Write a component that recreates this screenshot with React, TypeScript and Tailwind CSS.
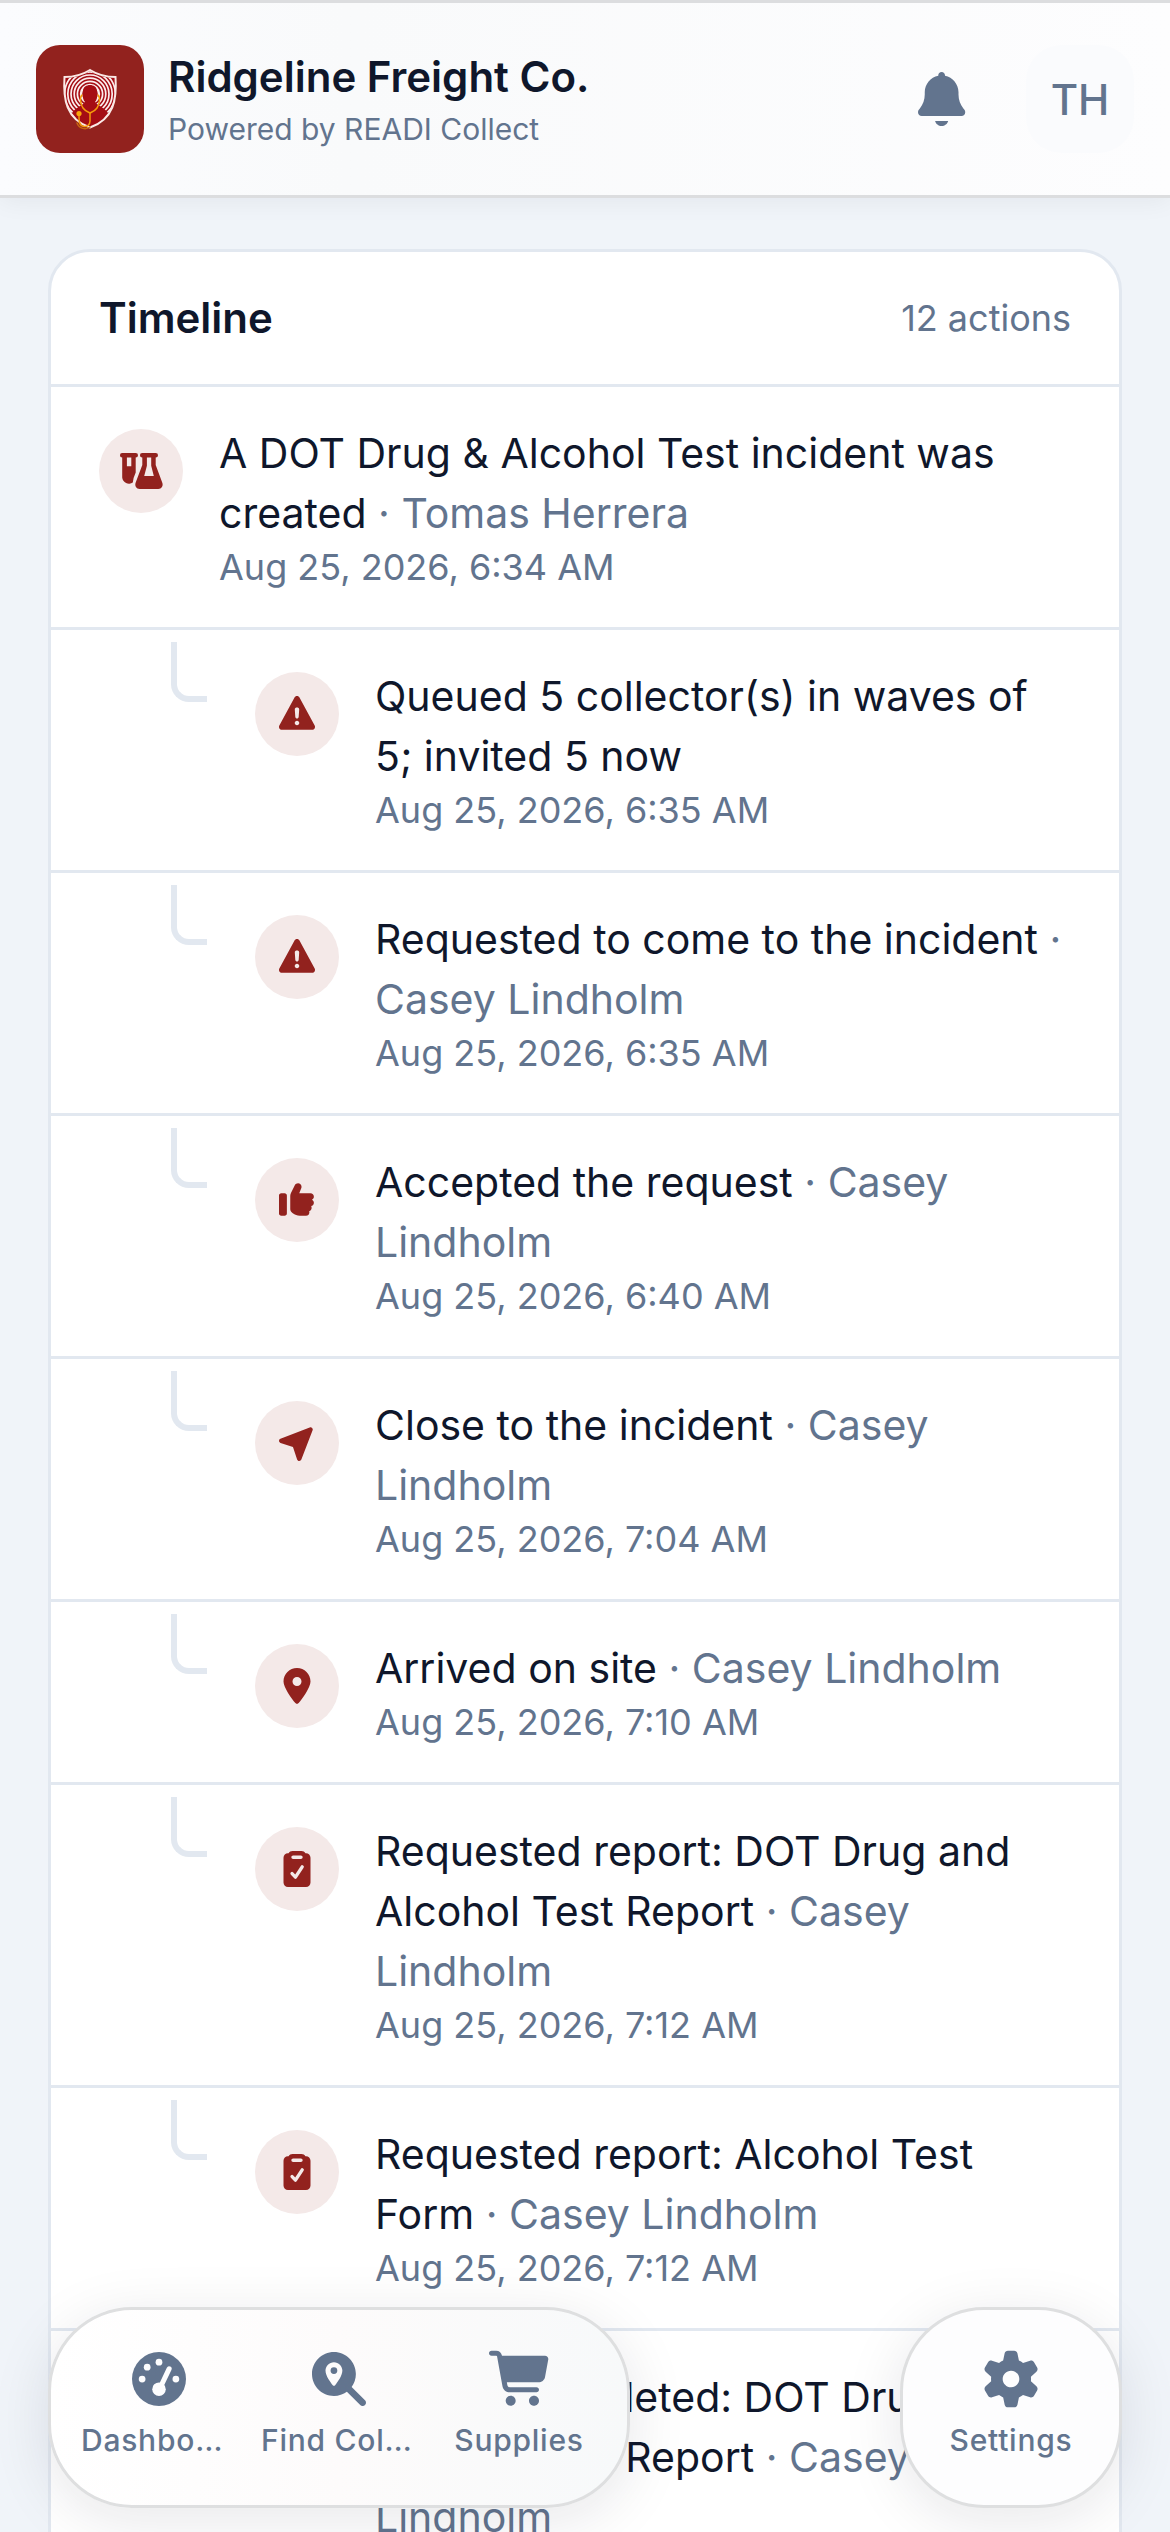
import React from 'react';
import { FaLocationDot, FaMagnifyingGlassLocation } from 'react-icons/fa6';

type IconProps = { className?: string };

const BellIcon: React.FC<IconProps> = ({ className }) => (
  <svg viewBox="0 0 448 512" fill="currentColor" className={className} aria-hidden="true">
    <path d="M224 0c-17.7 0-32 14.3-32 32l0 3.2C119 50 64 114.6 64 192l0 21.7c0 48.1-16.4 94.8-46.4 132.4L7.8 358.3C2.7 364.6 0 372.4 0 380.5 0 400.1 15.9 416 35.5 416l376.9 0c19.6 0 35.5-15.9 35.5-35.5 0-8.1-2.7-15.9-7.8-22.2l-9.8-12.2C400.4 308.5 384 261.8 384 213.7l0-21.7c0-77.4-55-142-128-156.8l0-3.2c0-17.7-14.3-32-32-32zM162 464c7.1 27.6 32.2 48 62 48s54.9-20.4 62-48l-124 0z" />
  </svg>
);

const FlaskIcon: React.FC<IconProps> = ({ className }) => (
  <svg viewBox="-1 0 45 36" fill="currentColor" fillRule="evenodd" className={className} aria-hidden="true">
    <path d="M2.300 0H15.700A2.300 2.300 0 0 1 15.700 4.600V19.500L13.600 25L12.800 29.500A6.800 6.800 0 0 1 2.200 24.500V4.600A2.300 2.300 0 0 1 2.300 0ZM6.900 4.600V13.300H11.300V4.600Z" />
    <path d="M22.200 0H35.700A2.300 2.300 0 0 1 35.700 4.600V12L42.200 29.500C43.600 33 41.500 36 38.300 36H19.700C16.400 36 14.400 33 15.700 29.500L22.300 12V4.600A2.300 2.300 0 0 1 22.200 0ZM26.900 4.600V12.800L24.200 23H33.800L31.200 12.800V4.600Z" />
  </svg>
);

const WarningIcon: React.FC<IconProps> = ({ className }) => (
  <svg viewBox="64 64 512 512" fill="currentColor" className={className} aria-hidden="true">
    <path d="M320 64C334.7 64 348.2 72.1 355.2 85L571.2 485C577.9 497.4 577.6 512.4 570.4 524.5C563.2 536.6 550.1 544 536 544L104 544C89.9 544 76.8 536.6 69.6 524.5C62.4 512.4 62.1 497.4 68.8 485L284.8 85C291.8 72.1 305.3 64 320 64zM320 416C302.3 416 288 430.3 288 448C288 465.7 302.3 480 320 480C337.7 480 352 465.7 352 448C352 430.3 337.7 416 320 416zM320 224C301.8 224 287.3 239.5 288.6 257.7L296 361.7C296.9 374.2 307.4 384 319.9 384C332.5 384 342.9 374.3 343.8 361.7L351.2 257.7C352.5 239.5 338.1 224 319.8 224z" />
  </svg>
);

const ThumbIcon: React.FC<IconProps> = ({ className }) => (
  <svg viewBox="64 64 512 512" fill="currentColor" className={className} aria-hidden="true">
    <path d="M144 224C161.7 224 176 238.3 176 256L176 512C176 529.7 161.7 544 144 544L96 544C78.3 544 64 529.7 64 512L64 256C64 238.3 78.3 224 96 224L144 224zM334.6 80C361.9 80 384 102.1 384 129.4L384 133.6C384 140.4 382.7 147.2 380.2 153.5L352 224L512 224C538.5 224 560 245.5 560 272C560 291.7 548.1 308.6 531.1 316C548.1 323.4 560 340.3 560 360C560 383.4 543.2 402.9 521 407.1C525.4 414.4 528 422.9 528 432C528 454.2 513 472.8 492.6 478.3C494.8 483.8 496 489.8 496 496C496 522.5 474.5 544 448 544L360.1 544C323.8 544 288.5 531.6 260.2 508.9L248 499.2C232.8 487.1 224 468.7 224 449.2L224 262.6C224 247.7 227.5 233 234.1 219.7L290.3 107.3C298.7 90.6 315.8 80 334.6 80z" />
  </svg>
);

const ArrowIcon: React.FC<IconProps> = ({ className }) => (
  <svg viewBox="64 64 512 512" fill="currentColor" className={className} aria-hidden="true">
    <path d="M541.9 139.5C546.4 127.7 543.6 114.3 534.7 105.4C525.8 96.5 512.4 93.6 500.6 98.2L84.6 258.2C71.9 263 63.7 275.2 64 288.7C64.3 302.2 73.1 314.1 85.9 318.3L262.7 377.2L321.6 553.9C325.9 566.7 337.8 575.5 351.3 575.8C364.8 576.1 377 567.8 381.8 555.2L541.8 139.2z" />
  </svg>
);

const ClipboardIcon: React.FC<IconProps> = ({ className }) => (
  <svg viewBox="64 64 512 512" fill="currentColor" className={className} aria-hidden="true">
    <path d="M439.4 96L448 96C483.3 96 512 124.7 512 160L512 512C512 547.3 483.3 576 448 576L192 576C156.7 576 128 547.3 128 512L128 160C128 124.7 156.7 96 192 96L200.6 96C211.7 76.9 232.4 64 256 64L384 64C407.7 64 428.4 76.9 439.4 96zM376 176C389.3 176 400 165.3 400 152C400 138.7 389.3 128 376 128L264 128C250.7 128 240 138.7 240 152C240 165.3 250.7 176 264 176L376 176z" />
    <path d="M250 385L298 435L394 290" fill="none" stroke="#f4e9e8" strokeWidth="48" strokeLinecap="round" strokeLinejoin="round" />
  </svg>
);

const GaugeIcon: React.FC<IconProps> = ({ className }) => (
  <svg viewBox="0 0 512 512" className={className} aria-hidden="true">
    <circle cx="256" cy="256" r="256" fill="currentColor" />
    <g fill="#fdfdfe">
      <circle cx="256" cy="96" r="32" />
      <circle cx="144" cy="144" r="32" />
      <circle cx="96" cy="256" r="32" />
      <circle cx="416" cy="256" r="32" />
      <circle cx="256" cy="352" r="64" />
    </g>
    <path d="M276 320L352 160" stroke="#fdfdfe" strokeWidth="48" strokeLinecap="round" />
  </svg>
);

const CartIcon: React.FC<IconProps> = ({ className }) => (
  <svg viewBox="0 32 576 576" fill="currentColor" className={className} aria-hidden="true">
    <path d="M24 48C10.7 48 0 58.7 0 72C0 85.3 10.7 96 24 96L69.3 96C73.2 96 76.5 98.8 77.2 102.6L129.3 388.9C135.5 423.1 165.3 448 200.1 448L456 448C469.3 448 480 437.3 480 424C480 410.7 469.3 400 456 400L200.1 400C188.5 400 178.6 391.7 176.5 380.3L171.4 352L475 352C505.8 352 532.2 330.1 537.9 299.8L568.9 133.9C572.6 114.2 557.5 96 537.4 96L124.7 96L124.3 94C119.5 67.4 96.3 48 69.2 48L24 48zM208 576C234.5 576 256 554.5 256 528C256 501.5 234.5 480 208 480C181.5 480 160 501.5 160 528C160 554.5 181.5 576 208 576zM432 576C458.5 576 480 554.5 480 528C480 501.5 458.5 480 432 480C405.5 480 384 501.5 384 528C384 554.5 405.5 576 432 576z" />
  </svg>
);

const GearIcon: React.FC<IconProps> = ({ className }) => (
  <svg viewBox="32 32 576 576" fill="currentColor" className={className} aria-hidden="true">
    <path d="M259.1 73.5C262.1 58.7 275.2 48 290.4 48L350.2 48C365.4 48 378.5 58.7 381.5 73.5L396 143.5C410.1 149.5 423.3 157.2 435.3 166.3L503.1 143.8C517.5 139 533.3 145 540.9 158.2L570.8 210C578.4 223.2 575.7 239.8 564.3 249.9L511 297.3C511.9 304.7 512.3 312.3 512.3 320C512.3 327.7 511.8 335.3 511 342.7L564.4 390.2C575.8 400.3 578.4 417 570.9 430.1L541 481.9C533.4 495 517.6 501.1 503.2 496.3L435.4 473.8C423.3 482.9 410.1 490.5 396.1 496.6L381.7 566.5C378.6 581.4 365.5 592 350.4 592L290.6 592C275.4 592 262.3 581.3 259.3 566.5L244.9 496.6C230.8 490.6 217.7 482.9 205.6 473.8L137.5 496.3C123.1 501.1 107.3 495.1 99.7 481.9L69.8 430.1C62.2 416.9 64.9 400.3 76.3 390.2L129.7 342.7C128.8 335.3 128.4 327.7 128.4 320C128.4 312.3 128.9 304.7 129.7 297.3L76.3 249.8C64.9 239.7 62.3 223 69.8 209.9L99.7 158.1C107.3 144.9 123.1 138.9 137.5 143.7L205.3 166.2C217.4 157.1 230.6 149.5 244.6 143.4L259.1 73.5zM320.3 400C364.5 399.8 400.2 363.9 400 319.7C399.8 275.5 363.9 239.8 319.7 240C275.5 240.2 239.8 276.1 240 320.3C240.2 364.5 276.1 400.2 320.3 400z" />
  </svg>
);

const Logo: React.FC = () => (
  <svg viewBox="0 0 108 108" className="size-[108px] shrink-0 rounded-[24px] bg-[#92221e]" role="img" aria-label="READI Collect">
    <defs>
      <clipPath id="shield">
        <path d="M54 26C46 31 38 33 29 33C28 54 30 73 54 82C78 73 80 54 79 33C70 33 62 31 54 26Z" />
      </clipPath>
    </defs>
    <g clipPath="url(#shield)">
      <rect x="26" y="22" width="56" height="64" fill="#a50d14" />
      <g fill="none" stroke="#fbeeee" strokeWidth="1.7">
        <circle cx="54" cy="49" r="9" strokeWidth="2.4" />
        <circle cx="54" cy="49" r="12.6" />
        <circle cx="54" cy="49" r="15.8" />
        <circle cx="54" cy="49" r="19" />
        <circle cx="54" cy="49" r="22.2" />
        <circle cx="54" cy="49" r="25.4" />
      </g>
      <path d="M30 84L36 68C40 62 46 61 49 57C46 54 47 49 47 46C47 38 61 38 61 46C61 49 62 54 59 57C62 61 68 62 72 68L78 84Z" fill="#a50d14" />
    </g>
    <path d="M54 25C46 30 38 32 28.500 32C27 54 30 74 54 82.500C78 74 81 54 79.500 32C70 32 62 30 54 25Z" fill="none" stroke="#fbe9e6" strokeWidth="2" />
    <g fill="none" stroke="#f39a0b" strokeWidth="1.500" strokeLinecap="round">
      <path d="M46 50C43 53 45 60 47 63C49 66 52 67 54 68C56 67 59 66 61 63C63 60 65 53 62 50" />
      <path d="M54 68V76C54 80 51 82 48 81.500C43 81 43 76 43 70" />
      <path d="M41 78C43 84 50 85 54 82" stroke="#c7660f" />
    </g>
    <circle cx="43" cy="68.500" r="2.600" fill="#f9a60a" />
  </svg>
);

type Action = {
  icon: React.ReactNode;
  text: string;
  actor?: string;
  time: string;
  nested?: boolean;
};

const iconSize = "size-9";

const actions: Action[] = [
  {
    icon: <FlaskIcon className="h-9 w-[45px]" />,
    text: "A DOT Drug & Alcohol Test incident was created",
    actor: "Tomas Herrera",
    time: "Aug 25, 2026, 6:34 AM"
  },
  {
    icon: <WarningIcon className={iconSize} />,
    text: "Queued 5 collector(s) in waves of 5; invited 5 now",
    time: "Aug 25, 2026, 6:35 AM",
    nested: true
  },
  {
    icon: <WarningIcon className={iconSize} />,
    text: "Requested to come to the incident",
    actor: "Casey Lindholm",
    time: "Aug 25, 2026, 6:35 AM",
    nested: true
  },
  {
    icon: <ThumbIcon className={iconSize} />,
    text: "Accepted the request",
    actor: "Casey Lindholm",
    time: "Aug 25, 2026, 6:40 AM",
    nested: true
  },
  {
    icon: <ArrowIcon className={iconSize} />,
    text: "Close to the incident",
    actor: "Casey Lindholm",
    time: "Aug 25, 2026, 7:04 AM",
    nested: true
  },
  {
    icon: <FaLocationDot className={iconSize} />,
    text: "Arrived on site",
    actor: "Casey Lindholm",
    time: "Aug 25, 2026, 7:10 AM",
    nested: true
  },
  {
    icon: <ClipboardIcon className={iconSize} />,
    text: "Requested report: DOT Drug and Alcohol Test Report",
    actor: "Casey Lindholm",
    time: "Aug 25, 2026, 7:12 AM",
    nested: true
  },
  {
    icon: <ClipboardIcon className={iconSize} />,
    text: "Requested report: Alcohol Test Form",
    actor: "Casey Lindholm",
    time: "Aug 25, 2026, 7:12 AM",
    nested: true
  },
  {
    icon: <ClipboardIcon className={iconSize} />,
    text: "Report completed: DOT Drug and Alcohol Test Report",
    actor: "Casey Lindholm",
    time: "Aug 25, 2026, 7:40 AM",
    nested: true
  }
];

const TimelineRow: React.FC<{ action: Action }> = ({ action }) => (
  <li className={action.nested ? "flex gap-12 pr-12 pl-[120px]" : "flex px-12"}>
    {action.nested && (
      <span className="mt-3 h-[60px] w-9 shrink-0 rounded-bl-[18px] border-b-6 border-l-6 border-slate-200" />
    )}
    <div className="flex min-w-0 flex-1 items-start gap-9 py-9">
      <span className="mt-1.5 flex size-[84px] shrink-0 items-center justify-center rounded-full bg-[#f4e9e8] text-[#92221e]">
        {action.icon}
      </span>
      <div className="min-w-0 flex-1">
        <p className="text-[41px] leading-[60px] text-slate-900">
          {action.text}
          {action.actor && <span className="text-slate-500"> · {action.actor}</span>}
        </p>
        <time className="block text-[36px] leading-[48px] text-slate-500">{action.time}</time>
      </div>
    </div>
  </li>
);

const NavItem: React.FC<{ icon: React.ReactNode; label: string }> = ({ icon, label }) => (
  <a href="#" className="flex w-[180px] flex-col items-center gap-3 px-3 py-6 text-slate-500">
    <span className="flex h-[54px] items-center justify-center">{icon}</span>
    <span className="max-w-full truncate text-[30px] leading-[45px] font-medium tracking-wide">{label}</span>
  </a>
);

const App: React.FC = () => {
  return (
    <div className="relative flex h-screen flex-col overflow-hidden bg-[#f0f4f9] font-['Inter',sans-serif]">
      <header className="relative z-10 flex items-center justify-between border-y-3 border-[#dcdddf] bg-linear-to-r from-[#fbfcfe] via-[#f9fafb] via-30% to-[#fdfdfe] px-9 py-[42px] shadow-[0_3px_24px_rgba(15,23,42,0.06)]">
        <div className="flex items-center gap-6">
          <Logo />
          <div>
            <h1 className="text-[42px] leading-[60px] font-semibold text-slate-900">Ridgeline Freight Co.</h1>
            <p className="text-[30px] leading-[44px] text-slate-500">Powered by READI Collect</p>
          </div>
        </div>
        <div className="flex items-center gap-9">
          <button type="button" aria-label="Notifications" className="flex size-24 items-center justify-center text-slate-500">
            <BellIcon className="h-[54px]" />
          </button>
          <button type="button" className="size-[108px] rounded-[36px] bg-[#fafbfd] text-[42px] font-medium text-slate-500">
            TH
          </button>
        </div>
      </header>

      <main className="min-h-0 flex-1 overflow-y-auto px-12 pt-[51px] [scrollbar-width:none]">
        <section className="rounded-[42px] border-3 border-slate-200 bg-white">
          <div className="flex items-center justify-between border-b-3 border-slate-200 px-12 py-9">
            <h2 className="text-[42px] leading-[60px] font-semibold text-slate-900">Timeline</h2>
            <span className="text-[36px] leading-[48px] text-slate-500">12 actions</span>
          </div>
          <ul className="divide-y-3 divide-slate-200">
            {actions.map((action, idx) => (
              <TimelineRow key={idx} action={action} />
            ))}
          </ul>
        </section>
      </main>

      {/* floating tab bar */}
      <nav className="absolute inset-x-12 bottom-6 z-10 flex justify-between">
        <div className="flex rounded-[84px] border-3 border-[#dedfe0] bg-linear-to-r from-white via-[#fdfbfb] to-[#f7f9fa] p-[18px] shadow-[0_12px_60px_rgba(15,23,42,0.1)]">
          <NavItem icon={<GaugeIcon className="size-[54px]" />} label="Dashboard" />
          <NavItem icon={<FaMagnifyingGlassLocation className="size-[54px]" />} label="Find Collectors" />
          <NavItem icon={<CartIcon className="size-[60px]" />} label="Supplies" />
        </div>
        <div className="flex rounded-[84px] border-3 border-[#dedfe0] bg-[#fdfdfe] p-[18px] shadow-[0_12px_60px_rgba(15,23,42,0.1)]">
          <NavItem icon={<GearIcon className="size-[60px]" />} label="Settings" />
        </div>
      </nav>
    </div>
  );
};

export default App;
